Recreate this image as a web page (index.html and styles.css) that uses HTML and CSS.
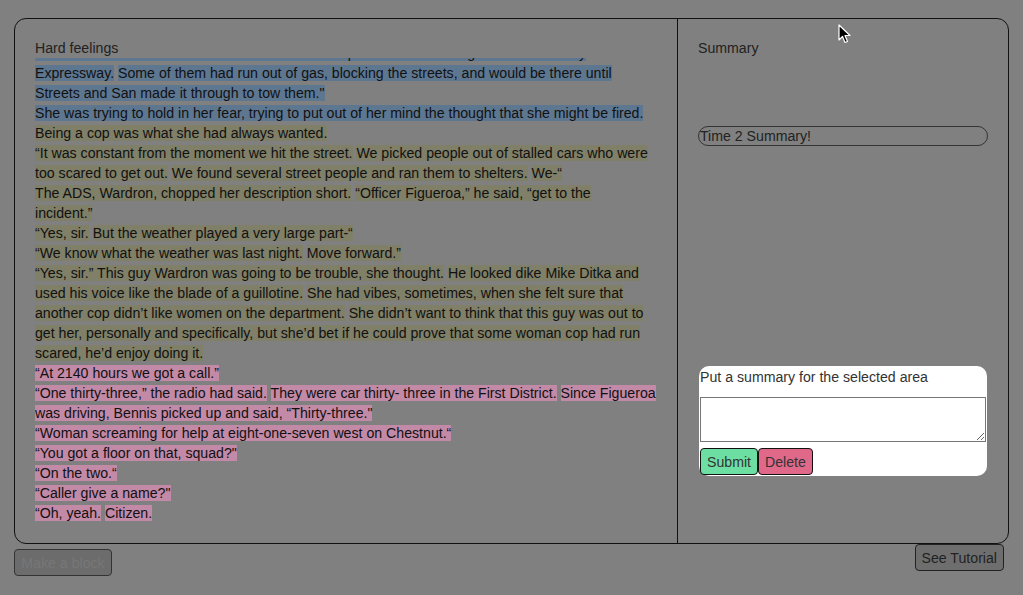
FILE: index.html
```html
<!DOCTYPE html>
<html lang="en">
<head>
<meta charset="utf-8">
<title>Hard feelings</title>
<link rel="stylesheet" href="styles.css">
</head>
<body>
<div class="page">
  <div class="box">
    <section class="left">
      <div class="title">Hard feelings</div>
      <div class="reader">
        <div class="story">
          <p><span class="hl blue">Stranded motorists had abandoned their cars all up and down the length of the Kennedy<br>Expressway.</span> <span class="hl blue">Some of them had run out of gas, blocking the streets, and would be there until Streets and San made it through to tow them."</span></p>
          <p><span class="hl blue">She was trying to hold in her fear, trying to put out of her mind the thought that she might be fired.</span></p>
          <p><span class="hl olive">Being a cop was what she had always wanted.</span></p>
          <p><span class="hl olive">“It was constant from the moment we hit the street.</span> <span class="hl olive">We picked people out of stalled cars who were too scared to get out.</span> <span class="hl olive">We found several street people and ran them to shelters.</span> <span class="hl olive">We-“</span></p>
          <p><span class="hl olive">The ADS, Wardron, chopped her description short.</span> <span class="hl olive">“Officer Figueroa,” he said, “get to the<br>incident.”</span></p>
          <p><span class="hl olive">“Yes, sir.</span> <span class="hl olive">But the weather played a very large part-“</span></p>
          <p><span class="hl olive">“We know what the weather was last night.</span> <span class="hl olive">Move forward.”</span></p>
          <p><span class="hl olive">“Yes, sir.” This guy Wardron was going to be trouble, she thought.</span> <span class="hl olive">He looked dike Mike Ditka and used his voice like the blade of a guillotine.</span> <span class="hl olive">She had vibes, sometimes, when she felt sure that another cop didn’t like women on the department.</span> <span class="hl olive">She didn’t want to think that this guy was out to get her, personally and specifically, but she’d bet if he could prove that some woman cop had run scared, he’d enjoy doing it.</span></p>
          <p><span class="hl pink">“At 2140 hours we got a call.”</span></p>
          <p><span class="hl pink">“One thirty-three,” the radio had said.</span> <span class="hl pink">They were car thirty- three in the First District.</span> <span class="hl pink">Since Figueroa was driving, Bennis picked up and said, “Thirty-three.&quot;</span></p>
          <p><span class="hl pink">“Woman screaming for help at eight-one-seven west on Chestnut.“</span></p>
          <p><span class="hl pink">“You got a floor on that, squad?&quot;</span></p>
          <p><span class="hl pink">“On the two.“</span></p>
          <p><span class="hl pink">“Caller give a name?&quot;</span></p>
          <p><span class="hl pink">“Oh, yeah.</span> <span class="hl pink">Citizen.</span></p>
        </div>
      </div>
    </section>
    <section class="right">
      <div class="title">Summary</div>
      <button class="summary-btn" type="button">Time 2 Summary!</button>
      <form class="popup">
        <label class="popup-label" for="sum">Put a summary for the selected area</label>
        <textarea id="sum" class="popup-text"></textarea>
        <div class="popup-actions">
          <button class="btn submit" type="button">Submit</button><button class="btn delete" type="button">Delete</button>
        </div>
      </form>
    </section>
  </div>
  <div class="bottom">
    <button class="btn block-btn" type="button" disabled>Make a block</button>
    <button class="btn tutorial-btn" type="button">See Tutorial</button>
  </div>
  <svg class="cursor" width="14" height="21" viewBox="0 0 14 21" aria-hidden="true">
    <path d="M1 1 L1 16 L4.5 12.5 L7 18.5 L9.5 17.5 L7 11.5 L12 11.5 Z" fill="#000" stroke="#fff" stroke-width="1.2" stroke-linejoin="round"/>
  </svg>
</div>
</body>
</html>
```

FILE: styles.css
```css
html, body {
  margin: 0;
  padding: 0;
}
body {
  background: #808080;
  font-family: "Liberation Sans", Arial, Helvetica, sans-serif;
  font-size: 14.15px;
  line-height: 20px;
  color: #111;
}
.page {
  position: relative;
  padding: 18px 14px 0 14px;
  height: 595px;
  box-sizing: border-box;
}
.box {
  display: flex;
  height: 526px;
  box-sizing: border-box;
  border: 1px solid #111;
  border-radius: 12px;
}
.left {
  width: 663px;
  box-sizing: border-box;
  border-right: 1px solid #111;
  padding: 19px 20px 20px 20px;
  display: flex;
  flex-direction: column;
}
.title {
  color: #222;
  height: 20px;
}
.reader {
  height: 465px;
  overflow: hidden;
}
.story {
  margin-top: -15px;
}
.story p {
  margin: 0;
}
.hl.blue { background: #5e7791; }
.hl.olive { background: #807f67; }
.hl.pink { background: #c38aa8; }

.right {
  flex: 1;
  padding: 19px 20px 0 20px;
  display: flex;
  flex-direction: column;
  align-items: stretch;
}
.summary-btn {
  margin-top: 68px;
  height: 20px;
  box-sizing: border-box;
  border: 1px solid #333;
  border-radius: 10px;
  background: transparent;
  color: #222;
  font: inherit;
  line-height: 18px;
  text-align: left;
  padding: 0 1px;
}
.popup {
  margin: 220px 0 0 1px;
  width: 288px;
  box-sizing: border-box;
  background: #fff;
  border-radius: 10px;
  padding: 1px;
  display: flex;
  flex-direction: column;
}
.popup-label {
  color: #333;
  line-height: 20px;
}
.popup-text {
  margin: 10px 0 0 0;
  width: 286px;
  height: 45px;
  box-sizing: border-box;
  border: 1px solid #767676;
  padding: 2px;
  display: block;
  resize: both;
  font: inherit;
}
.popup-actions {
  margin-top: 6px;
  display: flex;
}
.btn {
  font: inherit;
  height: 27px;
  box-sizing: border-box;
  padding: 0 6px;
  border: 1px solid #111;
  border-radius: 4px;
  color: #333;
}
.submit { background: #6ddfa3; }
.delete { background: #e0698a; }

.bottom {
  display: flex;
  justify-content: space-between;
  align-items: flex-start;
}
.block-btn {
  margin-top: 5px;
  height: 27px;
  width: 98px;
  background: #6c6c6c;
  border-color: #333;
  color: #777;
}
.tutorial-btn {
  margin-right: 5px;
  height: 27px;
  background: #6e6e6e;
  border-color: #222;
  color: #222;
}
.cursor {
  position: absolute;
  left: 838px;
  top: 24px;
}
```
